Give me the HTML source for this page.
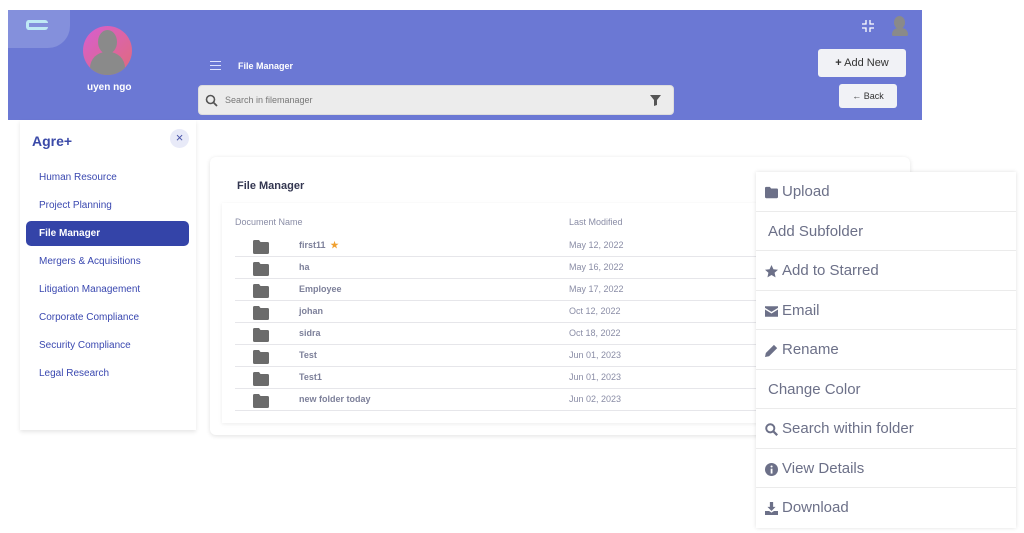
<!DOCTYPE html>
<html><head><style>
*{box-sizing:border-box;margin:0;padding:0}
body{width:1024px;height:533px;background:#fff;font-family:"Liberation Sans",sans-serif;position:relative;overflow:hidden}
.abs{position:absolute}
.hdr{left:8px;top:10px;width:914px;height:110px;background:#6b78d4}
.menu a{position:absolute;left:39px;font-size:10px;color:#3a48b0;white-space:nowrap}
.row{position:absolute;left:235px;width:540px;height:22px;border-bottom:1px solid #e6e6ea}
.row .n{position:absolute;left:64px;top:5px;font-size:9px;font-weight:bold;color:#7d809a}
.row .d{position:absolute;left:334px;top:5px;font-size:9px;color:#8a8da6}
.row svg{position:absolute;left:18px;top:5px}
.cm{left:756px;top:172px;width:260px;height:356px;background:#fff;box-shadow:0 0 4px rgba(0,0,0,.12)}
.cm div{height:39.5px;border-bottom:1px solid #ebebeb;font-size:15px;color:#6c7088;padding:11px 0 0 9px;white-space:nowrap;display:flex;align-items:flex-start}
.cm svg{width:13px;height:13px;margin:3px 4px 0 0;flex:none}
</style></head><body>
<div class="abs hdr"></div>
<div class="abs" style="left:8px;top:10px;width:62px;height:38px;background:#8490dc;border-radius:0 0 22px 0"></div>
<div class="abs" style="left:26px;top:20px;width:22px;height:10px;border:3px solid #bfe9f5;border-right:none;border-radius:3px"></div>
<div class="abs" style="left:83px;top:26px;width:49px;height:49px;border-radius:50%;background:linear-gradient(135deg,#d75ed0,#e06b7a);overflow:hidden">
<div class="abs" style="left:15px;top:4px;width:19px;height:24px;border-radius:50%;background:#8a8a8a"></div>
<div class="abs" style="left:7px;top:26px;width:35px;height:24px;border-radius:16px 16px 6px 6px;background:#8a8a8a"></div></div>
<div class="abs" style="left:87px;top:82px;font-size:10px;font-weight:bold;color:#fff">uyen ngo</div>
<div class="abs" style="left:210px;top:61px;width:11px;height:9px;border-top:1px solid #dfe3ff;border-bottom:1px solid #dfe3ff"></div>
<div class="abs" style="left:210px;top:65px;width:11px;height:1px;background:#dfe3ff"></div>
<div class="abs" style="left:238px;top:61px;font-size:9px;font-weight:bold;color:#fff">File Manager</div>
<div class="abs" style="left:198px;top:85px;width:476px;height:30px;background:#ececec;border-radius:4px;border:1px solid #ddd"></div>
<svg class="abs" style="left:205px;top:94px" width="13" height="13" viewBox="0 0 13 13"><circle cx="5.5" cy="5.5" r="4" fill="none" stroke="#555" stroke-width="1.6"/><path d="M8.5 8.5L12 12" stroke="#555" stroke-width="1.8"/></svg>
<div class="abs" style="left:225px;top:95px;font-size:9px;color:#777">Search in filemanager</div>
<svg class="abs" style="left:650px;top:95px" width="11" height="11" viewBox="0 0 11 11"><path d="M0 0H11L7 5V10L4 11V5Z" fill="#555"/></svg>
<svg class="abs" style="left:862px;top:20px" width="12" height="12" viewBox="0 0 12 12" stroke="#fff" stroke-width="1.3" fill="none"><path d="M4 0V4H0M8 0V4H12M4 12V8H0M8 12V8H12"/></svg>
<div class="abs" style="left:894px;top:16px;width:11px;height:13px;border-radius:50%;background:#8a8a8a"></div>
<div class="abs" style="left:892px;top:28px;width:16px;height:8px;border-radius:8px 8px 2px 2px;background:#8a8a8a"></div>
<div class="abs" style="left:818px;top:49px;width:88px;height:28px;background:#f1f2f6;border-radius:3px;font-size:11px;color:#333;text-align:center;line-height:28px"><b>+</b> Add New</div>
<div class="abs" style="left:839px;top:84px;width:58px;height:24px;background:#f1f2f6;border-radius:3px;font-size:9px;color:#333;text-align:center;line-height:24px"><b>←</b> Back</div>

<div class="abs" style="left:20px;top:120px;width:176px;height:310px;background:#fff;box-shadow:0 2px 4px rgba(0,0,0,.1)"></div>
<div class="abs" style="left:32px;top:133px;font-size:14px;font-weight:bold;color:#3b4aa8">Agre+</div>
<div class="abs" style="left:170px;top:129px;width:19px;height:19px;border-radius:50%;background:#e8eaf8;color:#4a55a8;font-size:13px;text-align:center;line-height:18px">×</div>
<div class="abs" style="left:26px;top:221px;width:163px;height:25px;background:#3444a8;border-radius:5px"></div>
<div class="menu">
<a style="top:172px">Human Resource</a>
<a style="top:200px">Project Planning</a>
<a style="top:228px;color:#fff;font-weight:bold">File Manager</a>
<a style="top:256px">Mergers &amp; Acquisitions</a>
<a style="top:284px">Litigation Management</a>
<a style="top:312px">Corporate Compliance</a>
<a style="top:340px">Security Compliance</a>
<a style="top:368px">Legal Research</a>
</div>

<div class="abs" style="left:210px;top:157px;width:700px;height:278px;background:#fff;border-radius:6px;box-shadow:0 1px 5px rgba(0,0,0,.12)"></div>
<div class="abs" style="left:237px;top:180px;font-size:11px;font-weight:bold;color:#333650">File Manager</div>
<div class="abs" style="left:222px;top:203px;width:600px;height:220px;background:#fff;box-shadow:0 1px 4px rgba(0,0,0,.08)"></div>
<div class="abs" style="left:235px;top:217px;font-size:9px;color:#8a8da6">Document Name</div>
<div class="abs" style="left:569px;top:217px;font-size:9px;color:#8a8da6">Last Modified</div>
<div class="row" style="top:235px"><svg width="16" height="14" viewBox="0 0 16 14"><path d="M0 1.5Q0 0 1.5 0H6L7.5 2H14.5Q16 2 16 3.5V12.5Q16 14 14.5 14H1.5Q0 14 0 12.5Z" fill="#6b6b6b"/></svg><span class="n">first11 &nbsp;<span style="color:#f0a030">★</span></span><span class="d">May 12, 2022</span></div>
<div class="row" style="top:257px"><svg width="16" height="14" viewBox="0 0 16 14"><path d="M0 1.5Q0 0 1.5 0H6L7.5 2H14.5Q16 2 16 3.5V12.5Q16 14 14.5 14H1.5Q0 14 0 12.5Z" fill="#6b6b6b"/></svg><span class="n">ha</span><span class="d">May 16, 2022</span></div>
<div class="row" style="top:279px"><svg width="16" height="14" viewBox="0 0 16 14"><path d="M0 1.5Q0 0 1.5 0H6L7.5 2H14.5Q16 2 16 3.5V12.5Q16 14 14.5 14H1.5Q0 14 0 12.5Z" fill="#6b6b6b"/></svg><span class="n">Employee</span><span class="d">May 17, 2022</span></div>
<div class="row" style="top:301px"><svg width="16" height="14" viewBox="0 0 16 14"><path d="M0 1.5Q0 0 1.5 0H6L7.5 2H14.5Q16 2 16 3.5V12.5Q16 14 14.5 14H1.5Q0 14 0 12.5Z" fill="#6b6b6b"/></svg><span class="n">johan</span><span class="d">Oct 12, 2022</span></div>
<div class="row" style="top:323px"><svg width="16" height="14" viewBox="0 0 16 14"><path d="M0 1.5Q0 0 1.5 0H6L7.5 2H14.5Q16 2 16 3.5V12.5Q16 14 14.5 14H1.5Q0 14 0 12.5Z" fill="#6b6b6b"/></svg><span class="n">sidra</span><span class="d">Oct 18, 2022</span></div>
<div class="row" style="top:345px"><svg width="16" height="14" viewBox="0 0 16 14"><path d="M0 1.5Q0 0 1.5 0H6L7.5 2H14.5Q16 2 16 3.5V12.5Q16 14 14.5 14H1.5Q0 14 0 12.5Z" fill="#6b6b6b"/></svg><span class="n">Test</span><span class="d">Jun 01, 2023</span></div>
<div class="row" style="top:367px"><svg width="16" height="14" viewBox="0 0 16 14"><path d="M0 1.5Q0 0 1.5 0H6L7.5 2H14.5Q16 2 16 3.5V12.5Q16 14 14.5 14H1.5Q0 14 0 12.5Z" fill="#6b6b6b"/></svg><span class="n">Test1</span><span class="d">Jun 01, 2023</span></div>
<div class="row" style="top:389px"><svg width="16" height="14" viewBox="0 0 16 14"><path d="M0 1.5Q0 0 1.5 0H6L7.5 2H14.5Q16 2 16 3.5V12.5Q16 14 14.5 14H1.5Q0 14 0 12.5Z" fill="#6b6b6b"/></svg><span class="n">new folder today</span><span class="d">Jun 02, 2023</span></div>

<div class="abs cm">
<div><svg viewBox="0 0 16 14"><path d="M0 1.5Q0 0 1.5 0H6L7.5 2H14.5Q16 2 16 3.5V12.5Q16 14 14.5 14H1.5Q0 14 0 12.5Z" fill="#6c7088"/></svg>Upload</div>
<div style="padding-left:12px">Add Subfolder</div>
<div><svg viewBox="0 0 16 16"><path d="M8 0L10.4 5.2 16 5.8 11.8 9.6 13 15.2 8 12.3 3 15.2 4.2 9.6 0 5.8 5.6 5.2Z" fill="#6c7088"/></svg>Add to Starred</div>
<div><svg viewBox="0 0 16 13"><path d="M0 0H16V2L8 7 0 2Z M0 4L8 9 16 4V13H0Z" fill="#6c7088"/></svg>Email</div>
<div><svg viewBox="0 0 16 16"><path d="M0 16L1 11 11 1 15 5 5 15Z" fill="#6c7088"/></svg>Rename</div>
<div style="padding-left:12px">Change Color</div>
<div><svg viewBox="0 0 16 16"><circle cx="6.5" cy="6.5" r="5" fill="none" stroke="#6c7088" stroke-width="2.4"/><path d="M10 10L15 15" stroke="#6c7088" stroke-width="2.8"/></svg>Search within folder</div>
<div><svg viewBox="0 0 16 16"><circle cx="8" cy="8" r="8" fill="#6c7088"/><rect x="7" y="7" width="2.2" height="6" fill="#fff"/><circle cx="8.1" cy="4.3" r="1.3" fill="#fff"/></svg>View Details</div>
<div style="border:none"><svg viewBox="0 0 16 16"><path d="M6 0H10V6H13L8 11 3 6H6Z M0 11H5L8 13 11 11H16V16H0Z" fill="#6c7088"/></svg>Download</div>
</div>
</body></html>
